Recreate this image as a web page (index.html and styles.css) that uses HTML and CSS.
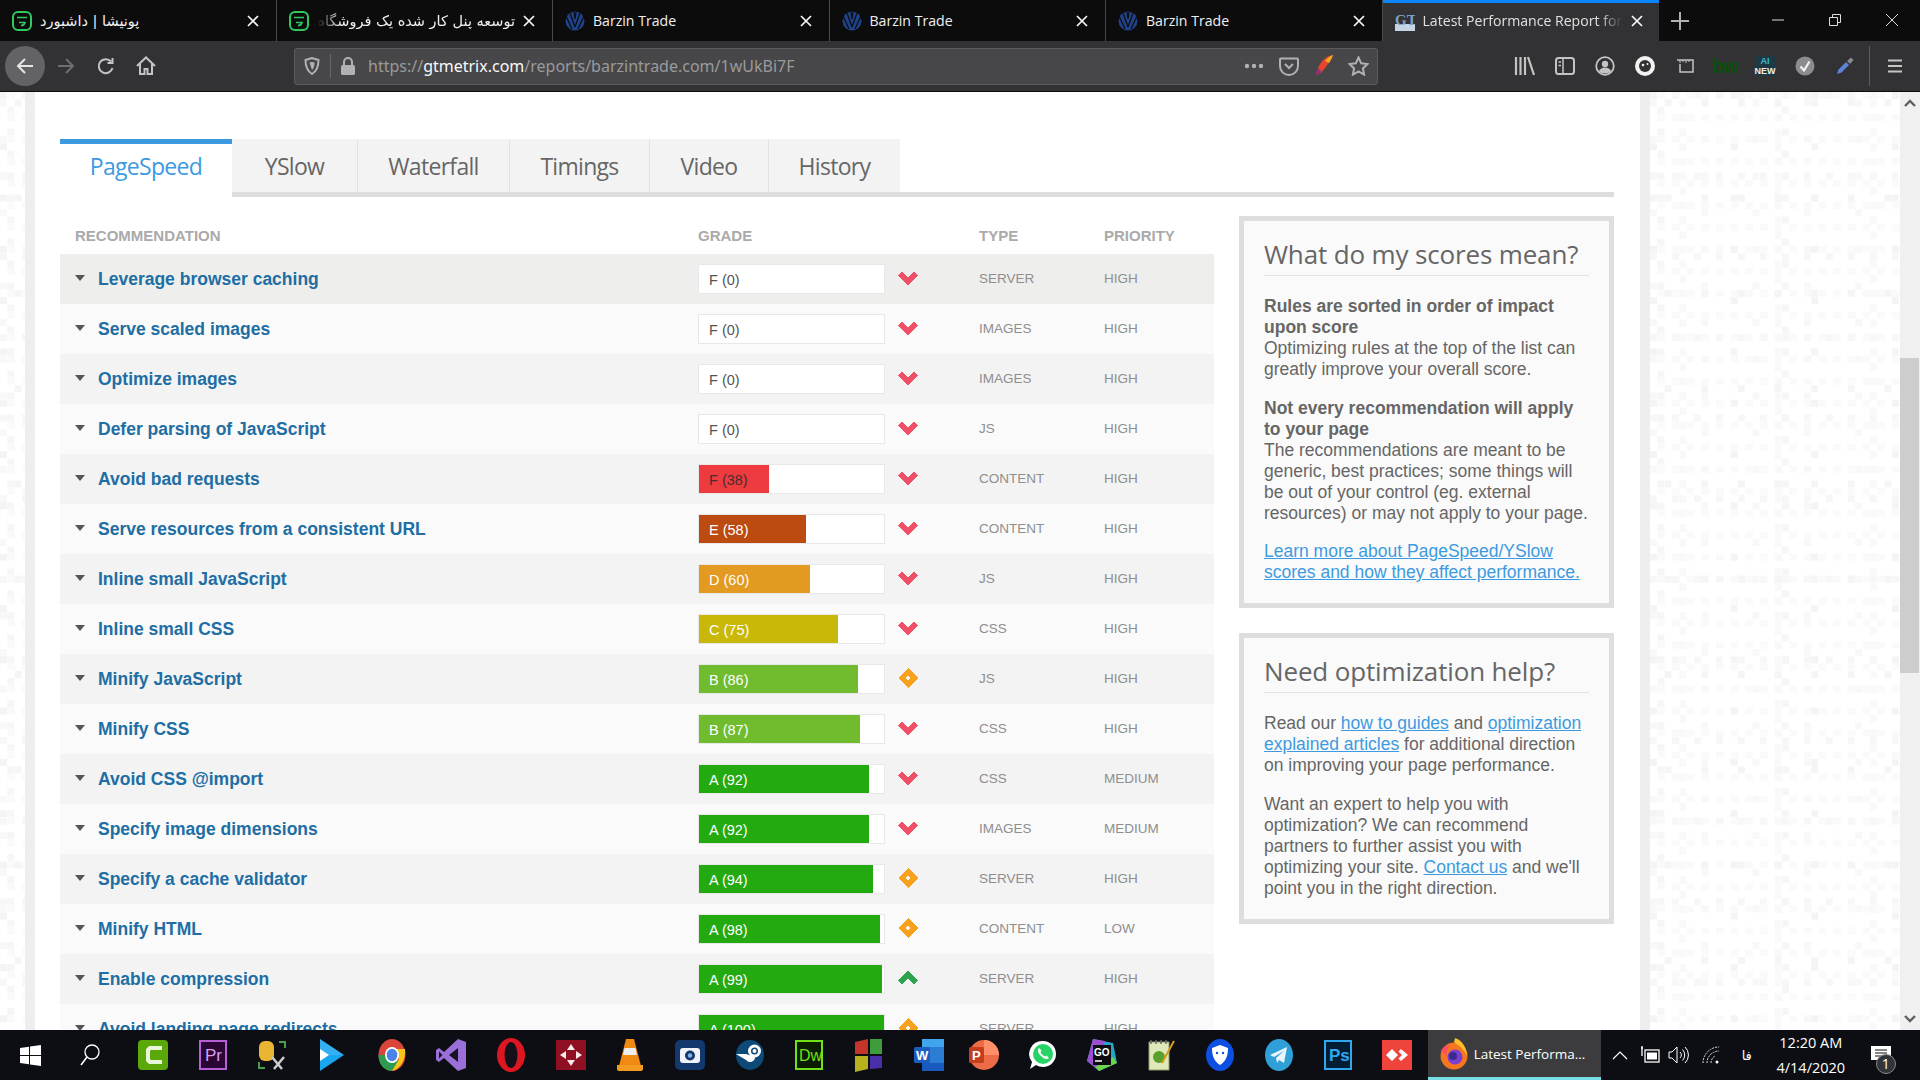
FILE: index.html
```html
<!DOCTYPE html>
<html>

<head>
	<meta charset="utf-8">
	<title>Latest Performance Report for: barzintrade.com</title>
	<link rel="stylesheet" href="styles.css">
</head>

<body>
	<svg class="defs" width="0" height="0">
		<symbol id="ponisha" viewBox="0 0 20 20">
			<rect x="1" y="1" width="18" height="18" rx="5" fill="none" stroke="#2ecc5f" stroke-width="2" />
			<path d="M5 6.5h10M7 11.5h6c-.5 2-2 3-4 3" fill="none" stroke="#2ecc5f" stroke-width="1.6" />
		</symbol>
		<symbol id="barzin" viewBox="0 0 20 20">
			<circle cx="10" cy="10" r="9.5" fill="#1f4288" />
			<path d="M1 5l6 13M5 2l5 14M10 16l5-14M13 18l6-13M9 1l1 7 1-7" fill="none" stroke="#0c0c0d" stroke-width="1.2" />
		</symbol>
		<symbol id="close" viewBox="0 0 12 12">
			<path d="M1 1l10 10M11 1L1 11" fill="none" stroke="#f9f9fa" stroke-width="1.7" />
		</symbol>
		<symbol id="down" viewBox="0 0 20 14">
			<path d="M0 4.5L4 .5l6 5.5 6-5.5 4 4L10 14z" fill="#ef5068" />
		</symbol>
		<symbol id="up" viewBox="0 0 20 14">
			<path d="M0 9.5L4 13.5l6-5.5 6 5.5 4-4L10 0z" fill="#2fa24e" />
		</symbol>
		<symbol id="same" viewBox="0 0 20 20">
			<path d="M10 0l10 10-10 10L0 10zM10 7.5L7.5 10l2.5 2.5 2.5-2.5z" fill="#f7a11e" fill-rule="evenodd" />
		</symbol>
	</svg>

	<div class="tabstrip">
		<div class="tab">
			<svg class="favicon"><use href="#ponisha" /></svg>
			<span class="tab-title fa-title">پونیشا | داشبورد</span>
			<svg class="tab-close"><use href="#close" /></svg>
		</div>
		<div class="tab">
			<svg class="favicon"><use href="#ponisha" /></svg>
			<span class="tab-title fa-title rtl">توسعه پنل کار شده یک فروشگاه</span>
			<svg class="tab-close"><use href="#close" /></svg>
		</div>
		<div class="tab">
			<svg class="favicon"><use href="#barzin" /></svg>
			<span class="tab-title">Barzin Trade</span>
			<svg class="tab-close"><use href="#close" /></svg>
		</div>
		<div class="tab">
			<svg class="favicon"><use href="#barzin" /></svg>
			<span class="tab-title">Barzin Trade</span>
			<svg class="tab-close"><use href="#close" /></svg>
		</div>
		<div class="tab">
			<svg class="favicon"><use href="#barzin" /></svg>
			<span class="tab-title">Barzin Trade</span>
			<svg class="tab-close"><use href="#close" /></svg>
		</div>
		<div class="tab tab-active">
			<svg class="favicon" viewBox="0 0 20 20">
				<rect y="13" width="20" height="7" fill="#c4d6e6" />
				<text x="0" y="14" class="gt-mark">GT</text>
			</svg>
			<span class="tab-title tab-fade">Latest Performance Report for:</span>
			<svg class="tab-close"><use href="#close" /></svg>
		</div>
		<div class="new-tab">
			<svg width="18" height="18" viewBox="0 0 18 18"><path d="M9 0v18M0 9h18" stroke="#b1b1b3" stroke-width="2" /></svg>
		</div>
		<div class="window-controls">
			<svg width="14" height="14" viewBox="0 0 14 14"><path d="M1 7h12" stroke="#ddd" /></svg>
			<svg width="14" height="14" viewBox="0 0 14 14"><path d="M1.5 4.5h8v8h-8zM4.5 4V1.5h8v8H10" fill="none" stroke="#ddd" /></svg>
			<svg width="14" height="14" viewBox="0 0 14 14"><path d="M1 1l12 12M13 1L1 13" stroke="#ddd" /></svg>
		</div>
	</div>

	<div class="toolbar">
		<div class="back-btn">
			<svg width="18" height="18" viewBox="0 0 18 18"><path d="M17 9H2M9 2L2 9l7 7" fill="none" stroke="#e6e6e6" stroke-width="2" /></svg>
		</div>
		<div class="tool-cell">
			<svg width="18" height="18" viewBox="0 0 18 18"><path d="M1 9h15M9 2l7 7-7 7" fill="none" stroke="#6f6f71" stroke-width="2" /></svg>
		</div>
		<div class="tool-cell">
			<svg width="18" height="18" viewBox="0 0 18 18"><path d="M15.5 11A7 7 0 1 1 14 4.5M15.5 1v5h-5" fill="none" stroke="#c4c4c5" stroke-width="2" /></svg>
		</div>
		<div class="tool-cell">
			<svg width="20" height="20" viewBox="0 0 20 20"><path d="M1 10l9-8.5 9 8.5M4 8v10h4.5v-5h3v5H16V8" fill="none" stroke="#c4c4c5" stroke-width="2" /></svg>
		</div>

		<div class="urlbar">
			<div class="url-cell url-shield">
				<svg width="16" height="18" viewBox="0 0 16 18"><path d="M1.5 3L8 1l6.5 2c0 7-1.5 11-6.500 14C3 14 1.500 10 1.500 3z" fill="none" stroke="#b1b1b3" stroke-width="2" /><path d="M5.5 5.5L8 5l2.5.5C10.5 9 10 11 8 13z" fill="#b1b1b3" /></svg>
			</div>
			<div class="url-sep"></div>
			<div class="url-cell url-lock">
				<svg width="16" height="18" viewBox="0 0 16 18"><path d="M4 8V5a4 4 0 0 1 8 0v3" fill="none" stroke="#b1b1b3" stroke-width="2" /><rect x="1" y="8" width="14" height="10" rx="1.5" fill="#b1b1b3" /></svg>
			</div>
			<div class="url-text">https://<b>gtmetrix.com</b>/reports/barzintrade.com/1wUkBi7F</div>
			<div class="url-cell">
				<svg width="20" height="6" viewBox="0 0 20 6"><circle cx="3" cy="3" r="2.2" fill="#b1b1b3" /><circle cx="10" cy="3" r="2.2" fill="#b1b1b3" /><circle cx="17" cy="3" r="2.2" fill="#b1b1b3" /></svg>
			</div>
			<div class="url-cell">
				<svg width="20" height="19" viewBox="0 0 20 19"><path d="M1 2.5a1 1 0 0 1 1-1h16a1 1 0 0 1 1 1V9a9 9 0 0 1-18 0z" fill="none" stroke="#b1b1b3" stroke-width="2" /><path d="M6 7l4 4 4-4" fill="none" stroke="#b1b1b3" stroke-width="2" /></svg>
			</div>
			<div class="url-cell">
				<svg width="20" height="22" viewBox="0 0 20 22"><path d="M19 0C12 1 7 6 4 13l-2 6 1 1c2-1 5-3 8-7 3-4 7-9 8-13z" fill="#e8452c" /><path d="M19 0c-3 1-6 3-8 6l4 2c2-3 3-5 4-8z" fill="#f5a623" /><path d="M4 13l-2 6 1 1c2-1 3-2 4-4z" fill="#8e2a8a" /></svg>
			</div>
			<div class="url-cell">
				<svg width="21" height="20" viewBox="0 0 21 20"><path d="M10.5 1.5l2.7 5.8 6.3.8-4.600 4.300 1.200 6.200-5.600-3.100-5.600 3.100 1.200-6.200L1.500 8.100l6.300-.8z" fill="none" stroke="#b1b1b3" stroke-width="2" /></svg>
			</div>
		</div>

		<div class="tool-icons">
			<div class="tool-cell">
				<svg width="22" height="20" viewBox="0 0 22 20"><path d="M2 1v18M6.5 1v18M11 1v18M14 1l6 18" fill="none" stroke="#c4c4c5" stroke-width="2.2" /></svg>
			</div>
			<div class="tool-cell">
				<svg width="20" height="18" viewBox="0 0 20 18"><rect x="1" y="1" width="18" height="16" rx="2.5" fill="none" stroke="#c4c4c5" stroke-width="2" /><path d="M8 1v16M3.5 5h2.5M3.5 8.5h2.5" stroke="#c4c4c5" stroke-width="1.5" /></svg>
			</div>
			<div class="tool-cell">
				<svg width="20" height="20" viewBox="0 0 20 20"><circle cx="10" cy="10" r="8.8" fill="none" stroke="#c4c4c5" stroke-width="1.8" /><circle cx="10" cy="8" r="3.2" fill="#c4c4c5" /><path d="M4 15.5c1-3 3-4 6-4s5 1 6 4c-3 2.5-9 2.5-12 0z" fill="#c4c4c5" /></svg>
			</div>
			<div class="tool-cell">
				<svg width="22" height="22" viewBox="0 0 22 22"><circle cx="11" cy="11" r="10" fill="#f2f2f2" /><circle cx="11" cy="11" r="6" fill="#323234" /><circle cx="9" cy="10" r="1.3" fill="#f2f2f2" /><circle cx="13.5" cy="9" r="1" fill="#f2f2f2" /></svg>
			</div>
			<div class="tool-cell">
				<svg width="18" height="14" viewBox="0 0 18 14"><path d="M1 1h16v12H4V5" fill="none" stroke="#c4c4c5" stroke-width="1.5" /><path d="M4 1v3M7 1v2M10 1v3M13 1v2" stroke="#c4c4c5" /></svg>
			</div>
			<div class="tool-cell"><span class="ext-bw">bw</span></div>
			<div class="tool-cell">
				<div class="ext-new"><i>AI</i>NEW</div>
			</div>
			<div class="tool-cell">
				<svg width="20" height="20" viewBox="0 0 20 20"><circle cx="10" cy="10" r="9.5" fill="#8c8c8e" /><path d="M5.5 10.5l3.5 4 5.5-9" fill="none" stroke="#f2f2f2" stroke-width="2.2" /></svg>
			</div>
			<div class="tool-cell">
				<svg width="18" height="18" viewBox="0 0 18 18"><path d="M1 17l1.5-4.5L10 5l3 3-7.5 7.5z" fill="#5d82d8" /><path d="M11 4l4-3.5 2.5 2.5L14 7z" fill="#8a8a8c" /></svg>
			</div>
		</div>
		<div class="tool-sep"></div>
		<div class="tool-cell menu-cell">
			<svg width="16" height="16" viewBox="0 0 16 16"><path d="M1 2.5h14M1 8h14M1 13.5h14" stroke="#c4c4c5" stroke-width="2.2" /></svg>
		</div>
	</div>

	<div class="viewport">
		<div class="gutter gutter-left"></div>

		<div class="report">
			<ul class="report-tabs">
				<li class="report-tab report-tab-active">PageSpeed</li>
				<li class="report-tab tab-yslow">YSlow</li>
				<li class="report-tab tab-waterfall">Waterfall</li>
				<li class="report-tab tab-timings">Timings</li>
				<li class="report-tab tab-video">Video</li>
				<li class="report-tab tab-history">History</li>
			</ul>

			<div class="report-body">
				<div class="rec-table">
					<div class="rec-head">
						<span class="col-name">RECOMMENDATION</span>
						<span class="col-grade">GRADE</span>
						<span class="col-type">TYPE</span>
						<span class="col-priority">PRIORITY</span>
					</div>

					<div class="rec-row rec-row-hover">
						<span class="col-name"><i class="caret"></i>Leverage browser caching</span>
						<div class="grade"><span class="grade-fill"></span><span class="grade-label">F (0)</span></div>
						<svg class="trend"><use href="#down" /></svg>
						<span class="col-type">SERVER</span><span class="col-priority">HIGH</span>
					</div>
					<div class="rec-row">
						<span class="col-name"><i class="caret"></i>Serve scaled images</span>
						<div class="grade"><span class="grade-fill"></span><span class="grade-label">F (0)</span></div>
						<svg class="trend"><use href="#down" /></svg>
						<span class="col-type">IMAGES</span><span class="col-priority">HIGH</span>
					</div>
					<div class="rec-row">
						<span class="col-name"><i class="caret"></i>Optimize images</span>
						<div class="grade"><span class="grade-fill"></span><span class="grade-label">F (0)</span></div>
						<svg class="trend"><use href="#down" /></svg>
						<span class="col-type">IMAGES</span><span class="col-priority">HIGH</span>
					</div>
					<div class="rec-row">
						<span class="col-name"><i class="caret"></i>Defer parsing of JavaScript</span>
						<div class="grade"><span class="grade-fill"></span><span class="grade-label">F (0)</span></div>
						<svg class="trend"><use href="#down" /></svg>
						<span class="col-type">JS</span><span class="col-priority">HIGH</span>
					</div>
					<div class="rec-row">
						<span class="col-name"><i class="caret"></i>Avoid bad requests</span>
						<div class="grade grade-f"><span class="grade-fill" style="width: 38%"></span><span class="grade-label">F (38)</span></div>
						<svg class="trend"><use href="#down" /></svg>
						<span class="col-type">CONTENT</span><span class="col-priority">HIGH</span>
					</div>
					<div class="rec-row">
						<span class="col-name"><i class="caret"></i>Serve resources from a consistent URL</span>
						<div class="grade grade-e"><span class="grade-fill" style="width: 58%"></span><span class="grade-label">E (58)</span></div>
						<svg class="trend"><use href="#down" /></svg>
						<span class="col-type">CONTENT</span><span class="col-priority">HIGH</span>
					</div>
					<div class="rec-row">
						<span class="col-name"><i class="caret"></i>Inline small JavaScript</span>
						<div class="grade grade-d"><span class="grade-fill" style="width: 60%"></span><span class="grade-label">D (60)</span></div>
						<svg class="trend"><use href="#down" /></svg>
						<span class="col-type">JS</span><span class="col-priority">HIGH</span>
					</div>
					<div class="rec-row">
						<span class="col-name"><i class="caret"></i>Inline small CSS</span>
						<div class="grade grade-c"><span class="grade-fill" style="width: 75%"></span><span class="grade-label">C (75)</span></div>
						<svg class="trend"><use href="#down" /></svg>
						<span class="col-type">CSS</span><span class="col-priority">HIGH</span>
					</div>
					<div class="rec-row">
						<span class="col-name"><i class="caret"></i>Minify JavaScript</span>
						<div class="grade grade-b"><span class="grade-fill" style="width: 86%"></span><span class="grade-label">B (86)</span></div>
						<svg class="trend trend-same"><use href="#same" /></svg>
						<span class="col-type">JS</span><span class="col-priority">HIGH</span>
					</div>
					<div class="rec-row">
						<span class="col-name"><i class="caret"></i>Minify CSS</span>
						<div class="grade grade-b"><span class="grade-fill" style="width: 87%"></span><span class="grade-label">B (87)</span></div>
						<svg class="trend"><use href="#down" /></svg>
						<span class="col-type">CSS</span><span class="col-priority">HIGH</span>
					</div>
					<div class="rec-row">
						<span class="col-name"><i class="caret"></i>Avoid CSS @import</span>
						<div class="grade grade-a"><span class="grade-fill" style="width: 92%"></span><span class="grade-label">A (92)</span></div>
						<svg class="trend"><use href="#down" /></svg>
						<span class="col-type">CSS</span><span class="col-priority">MEDIUM</span>
					</div>
					<div class="rec-row">
						<span class="col-name"><i class="caret"></i>Specify image dimensions</span>
						<div class="grade grade-a"><span class="grade-fill" style="width: 92%"></span><span class="grade-label">A (92)</span></div>
						<svg class="trend"><use href="#down" /></svg>
						<span class="col-type">IMAGES</span><span class="col-priority">MEDIUM</span>
					</div>
					<div class="rec-row">
						<span class="col-name"><i class="caret"></i>Specify a cache validator</span>
						<div class="grade grade-a"><span class="grade-fill" style="width: 94%"></span><span class="grade-label">A (94)</span></div>
						<svg class="trend trend-same"><use href="#same" /></svg>
						<span class="col-type">SERVER</span><span class="col-priority">HIGH</span>
					</div>
					<div class="rec-row">
						<span class="col-name"><i class="caret"></i>Minify HTML</span>
						<div class="grade grade-a"><span class="grade-fill" style="width: 98%"></span><span class="grade-label">A (98)</span></div>
						<svg class="trend trend-same"><use href="#same" /></svg>
						<span class="col-type">CONTENT</span><span class="col-priority">LOW</span>
					</div>
					<div class="rec-row">
						<span class="col-name"><i class="caret"></i>Enable compression</span>
						<div class="grade grade-a"><span class="grade-fill" style="width: 99%"></span><span class="grade-label">A (99)</span></div>
						<svg class="trend"><use href="#up" /></svg>
						<span class="col-type">SERVER</span><span class="col-priority">HIGH</span>
					</div>
					<div class="rec-row">
						<span class="col-name"><i class="caret"></i>Avoid landing page redirects</span>
						<div class="grade grade-a"><span class="grade-fill" style="width: 100%"></span><span class="grade-label">A (100)</span></div>
						<svg class="trend trend-same"><use href="#same" /></svg>
						<span class="col-type">SERVER</span><span class="col-priority">HIGH</span>
					</div>
				</div>

				<div class="side">
					<div class="side-box">
						<h3>What do my scores mean?</h3>
						<p><b>Rules are sorted in order of impact upon score</b><br>Optimizing rules at the top of the list can greatly improve your overall score.</p>
						<p><b>Not every recommendation will apply to your page</b><br>The recommendations are meant to be generic, best practices; some things will be out of your control (eg. external resources) or may not apply to your page.</p>
						<p><a href="#">Learn more about PageSpeed/YSlow scores and how they affect performance.</a></p>
					</div>
					<div class="side-box">
						<h3>Need optimization help?</h3>
						<p>Read our <a href="#">how to guides</a> and <a href="#">optimization explained articles</a> for additional direction on improving your page performance.</p>
						<p>Want an expert to help you with optimization? We can recommend partners to further assist you with optimizing your site. <a href="#">Contact us</a> and we'll point you in the right direction.</p>
					</div>
				</div>
			</div>
		</div>

		<div class="gutter gutter-right"></div>

		<div class="scrollbar">
			<svg width="14" height="10" viewBox="0 0 14 10"><path d="M2 8l5-5 5 5" fill="none" stroke="#606060" stroke-width="2.4" /></svg>
			<div class="scroll-track"><div class="scroll-thumb"></div></div>
			<svg width="14" height="10" viewBox="0 0 14 10"><path d="M2 2l5 5 5-5" fill="none" stroke="#606060" stroke-width="2.4" /></svg>
		</div>
	</div>

	<div class="taskbar">
		<div class="task-cell task-start">
			<svg width="21" height="21" viewBox="0 0 21 21"><path d="M0 3l9-1.300V10H0zM10 1.500L21 0v10H10zM0 11h9v8.300L0 18zM10 11h11v10l-11-1.500z" fill="#fff" /></svg>
		</div>
		<div class="task-cell task-search">
			<svg width="22" height="24" viewBox="0 0 22 24"><circle cx="13" cy="9" r="7" fill="none" stroke="#fff" stroke-width="1.3" /><path d="M8 14l-6 8" stroke="#fff" stroke-width="1.6" /></svg>
		</div>
		<div class="task-cell">
			<svg width="30" height="30" viewBox="0 0 30 30"><rect width="30" height="30" rx="4" fill="#5aa80a" /><path d="M24 6H11L8 9v12l3 3h13v-4H13l-1-1v-8l1-1h11z" fill="#e9f5d8" /></svg>
		</div>
		<div class="task-cell">
			<svg width="28" height="30" viewBox="0 0 28 30"><rect x="1" y="1" width="26" height="28" fill="#2a0634" stroke="#b65fd6" stroke-width="2" /><text x="6" y="21" class="tile-text tile-pr">Pr</text></svg>
		</div>
		<div class="task-cell">
			<svg width="30" height="30" viewBox="0 0 30 30"><rect x="2" y="1" width="15" height="20" rx="6" fill="#eab532" /><path d="M22 2h6v6M2 22v6h6" fill="none" stroke="#4c9c4e" stroke-width="2" /><path d="M15 17l10 12M27 17L17 29" stroke="#ccc" stroke-width="2.5" /></svg>
		</div>
		<div class="task-cell">
			<svg width="26" height="32" viewBox="0 0 26 32"><path d="M1 0l24 16L1 32z" fill="#19a6f1" /><path d="M1 0l24 16H1z" fill="#fff" opacity=".12" /><path d="M1 10l9 6-9 6z" fill="#fff" /></svg>
		</div>
		<div class="task-cell">
			<svg width="28" height="32" viewBox="0 0 28 32"><ellipse cx="14" cy="16" rx="13.5" ry="16" fill="#d9453a" /><path d="M14 16L.5 16C.5 25 6 32 14 32l6-9z" fill="#2e9c50" /><path d="M14 10h13c1 8-3 20-13 22l7-12z" fill="#f5c518" /><ellipse cx="14" cy="16" rx="7" ry="8" fill="#fff" /><ellipse cx="14" cy="16" rx="5.3" ry="6.2" fill="#4a84e8" /></svg>
		</div>
		<div class="task-cell">
			<svg width="30" height="32" viewBox="0 0 30 32"><path d="M22 0l8 3v26l-8 3L8 19l-5 4-3-2V11l3-2 5 4z" fill="#9a6fd8" /><path d="M22 9v14l-9-7zM3 12.5L6.5 16 3 19.5z" fill="#171321" /></svg>
		</div>
		<div class="task-cell">
			<svg width="28" height="34" viewBox="0 0 28 34"><ellipse cx="14" cy="17" rx="14" ry="17" fill="#dd1622" /><ellipse cx="14" cy="17" rx="6.5" ry="13" fill="#16101a" /></svg>
		</div>
		<div class="task-cell">
			<svg width="30" height="30" viewBox="0 0 30 30"><rect width="30" height="30" fill="#8e1022" /><path d="M15 4l4 6h-8zM15 26l-4-6h8zM4 15l6-4v8zM26 15l-6 4v-8z" fill="#f6e9e9" /></svg>
		</div>
		<div class="task-cell">
			<svg width="26" height="34" viewBox="0 0 26 34"><path d="M9 1h8l7 27H2z" fill="#f08a12" /><path d="M7.5 10h11l1.400 7H6z" fill="#eee" /><path d="M0 27h26v4a2 2 0 0 1-2 2H2a2 2 0 0 1-2-2z" fill="#f59a20" /></svg>
		</div>
		<div class="task-cell">
			<svg width="30" height="30" viewBox="0 0 30 30"><rect width="30" height="30" rx="5" fill="#12386e" /><rect x="5" y="8" width="20" height="15" rx="3" fill="#f0f4fa" /><circle cx="15" cy="15.5" r="5" fill="#12386e" /><circle cx="15" cy="15.5" r="2.2" fill="#7fb2e8" /></svg>
		</div>
		<div class="task-cell">
			<svg width="28" height="30" viewBox="0 0 28 30"><ellipse cx="14" cy="15" rx="14" ry="15" fill="#0e4a78" /><path d="M0 14l10 6a5 5 0 0 0 9-3l-9-3z" fill="#fff" /><circle cx="18.5" cy="11" r="6.5" fill="#fff" /><circle cx="18.5" cy="11" r="3.5" fill="#0e4a78" /><circle cx="18.5" cy="11" r="2" fill="#fff" /></svg>
		</div>
		<div class="task-cell">
			<svg width="28" height="30" viewBox="0 0 28 30"><rect x="1" y="1" width="26" height="28" fill="#0c1c00" stroke="#6fe01a" stroke-width="2" /><text x="4" y="21" class="tile-text tile-dw">Dw</text></svg>
		</div>
		<div class="task-cell">
			<svg width="28" height="34" viewBox="0 0 28 34"><path d="M0 4l13-3v15H0z" fill="#c4342a" /><path d="M15 1l12 0v15H15z" fill="#3f9c3a" /><path d="M0 18h13v13L0 34z" fill="#b7b11e" /><path d="M15 18h12v12l-12 1z" fill="#4b2fa8" /></svg>
		</div>
		<div class="task-cell">
			<svg width="30" height="32" viewBox="0 0 30 32"><rect x="8" y="0" width="22" height="32" rx="2" fill="#2b7cd3" /><rect x="8" y="0" width="22" height="8" fill="#41a5ee" /><rect x="8" y="24" width="22" height="8" fill="#185abd" /><rect x="0" y="8" width="16" height="16" rx="1.5" fill="#1a5fc0" /><text x="2" y="21" class="tile-text tile-word">W</text></svg>
		</div>
		<div class="task-cell">
			<svg width="30" height="30" viewBox="0 0 30 30"><circle cx="15" cy="15" r="15" fill="#ed6c47" /><path d="M15 0a15 15 0 0 1 15 15H15z" fill="#ff8f6b" /><rect y="7" width="15" height="16" rx="1.5" fill="#c43e1c" /><text x="3" y="20" class="tile-text tile-word">P</text></svg>
		</div>
		<div class="task-cell">
			<svg width="28" height="30" viewBox="0 0 28 30"><path d="M14 1a13 13 0 0 1 0 26c-2.5 0-5-.7-7-2l-6 4 2-7A13 13 0 0 1 14 1z" fill="#fff" /><circle cx="14" cy="14" r="10" fill="#25d366" /><path d="M10 8c-2 2-1 5 2 8s6 4 8 2l-2.5-2.5-1.5 1c-2-.7-3.5-2.2-4.5-4.5l1-1.5z" fill="#fff" /></svg>
		</div>
		<div class="task-cell">
			<svg width="30" height="32" viewBox="0 0 30 32"><path d="M6 0l20 4 4 20-18 8L0 22z" fill="#22a6c7" /><path d="M6 0l12 2-8 28-10-8z" fill="#9b4fd0" /><path d="M26 18l4 6-18 8-4-4z" fill="#6fd44a" /><rect x="6" y="6" width="18" height="20" fill="#0c0c10" /><text x="7" y="17" class="tile-text tile-go">GO</text><path d="M8 22h7" stroke="#fff" stroke-width="1.5" /></svg>
		</div>
		<div class="task-cell">
			<svg width="28" height="32" viewBox="0 0 28 32"><path d="M2 3h20v28H2z" fill="#dfe8b8" stroke="#8a9c6a" /><path d="M4 1v4M9 1v4M14 1v4M19 1v4" stroke="#6b6b6b" stroke-width="1.5" /><circle cx="12" cy="18" r="6" fill="#5aa02c" /><path d="M27 2L15 24" stroke="#d49a1c" stroke-width="2" /></svg>
		</div>
		<div class="task-cell">
			<svg width="28" height="32" viewBox="0 0 28 32"><ellipse cx="14" cy="16" rx="14" ry="16" fill="#0d4fe0" /><path d="M14 6l8 3c0 8-2 13-8 17-6-4-8-9-8-17z" fill="#fff" /><circle cx="11" cy="14" r="1.2" fill="#0d4fe0" /><circle cx="17" cy="14" r="1.2" fill="#0d4fe0" /></svg>
		</div>
		<div class="task-cell">
			<svg width="28" height="32" viewBox="0 0 28 32"><ellipse cx="14" cy="16" rx="14" ry="16" fill="#2f9fd8" /><path d="M5 16l17-8-3 16-5-3-2 3-1-5 8-7-10 6z" fill="#e9f5fb" /></svg>
		</div>
		<div class="task-cell">
			<svg width="28" height="30" viewBox="0 0 28 30"><rect x="1" y="1" width="26" height="28" fill="#001d33" stroke="#2fa8f0" stroke-width="2" /><text x="5" y="21" class="tile-text tile-ps">Ps</text></svg>
		</div>
		<div class="task-cell">
			<svg width="30" height="30" viewBox="0 0 30 30"><rect width="30" height="30" fill="#ef443b" /><path d="M10 9l6 6-6 6-6-6zM19 9l7 6-7 6-2.5-2.5L20 15l-3.5-3.5z" fill="#fff" /></svg>
		</div>
		<div class="task-active">
			<svg width="28" height="32" viewBox="0 0 28 32"><circle cx="14" cy="18" r="13.5" fill="#f5761f" /><path d="M14 4c3 3 9 5 13 14C27 10 22 2 15 0z" fill="#ffbd2e" /><path d="M1 13c2-4 6-6 9-6-3 3-4 7-3 11z" fill="#ff4f5e" /><circle cx="15" cy="19" r="7.5" fill="#7a3fd0" /><circle cx="13" cy="18" r="4" fill="#3a2a8c" /></svg>
			<span>Latest Performa...</span>
		</div>
		<div class="tray">
			<svg width="16" height="10" viewBox="0 0 16 10"><path d="M1 9l7-7 7 7" fill="none" stroke="#fff" stroke-width="1.2" /></svg>
			<svg width="20" height="20" viewBox="0 0 20 20"><rect x="5" y="5" width="14" height="12" fill="none" stroke="#fff" stroke-width="1.3" /><rect x="7" y="7.5" width="10" height="7" fill="#fff" /><path d="M2 1v5M1 3h2M2 6v5" stroke="#fff" stroke-width="1.3" /></svg>
			<svg class="tray-vol" width="22" height="22" viewBox="0 0 22 22"><path d="M2 8h3l5-5v16l-5-5H2z" fill="none" stroke="#fff" /><path d="M13 8a4 4 0 0 1 0 6M15.5 5.5a8 8 0 0 1 0 11M18 3a11 11 0 0 1 0 16" fill="none" stroke="#fff" /></svg>
			<svg width="20" height="20" viewBox="0 0 20 20"><path d="M2 18A16 16 0 0 1 18 2M6 18A12 12 0 0 1 18 6M10 18a8 8 0 0 1 4-7" fill="none" stroke="#ddd" stroke-dasharray="2 1" /><circle cx="16" cy="17" r="1.5" fill="#fff" /></svg>
			<span class="tray-lang">فا</span>
			<div class="clock"><span>12:20 AM</span><span>4/14/2020</span></div>
			<div class="notify">
				<svg width="20" height="18" viewBox="0 0 20 18"><path d="M0 0h20v14h-7l-4 4v-4H0z" fill="#fff" /><path d="M4 4h12M4 7h12M4 10h12" stroke="#0c0e13" /></svg>
				<span class="notify-badge">1</span>
			</div>
		</div>
	</div>
</body>

</html>
```

FILE: styles.css
```css
* {
	box-sizing: border-box;
}

html,
body {
	margin: 0;
	height: 100%;
	overflow: hidden;
}

body {
	display: flex;
	flex-direction: column;
	font-family: "Liberation Sans", Arial, sans-serif;
	background: #fff;
}

.defs {
	display: none;
}

/* browser tabs */
.tabstrip {
	display: flex;
	height: 41px;
	background: #0c0c0d;
	flex: none;
}

.tab {
	display: flex;
	align-items: center;
	width: 276.5px;
	padding: 0 17px 0 12px;
	border-right: 1px solid #4a4a4b;
	color: #f0f0f0;
	font: 14.1px "Open Sans", sans-serif;
}

.tab-active {
	background: #323234;
	border-top: 3px solid #0a84ff;
	border-right: 0;
	padding-bottom: 3px;
	padding-right: 16px;
	color: #e0e0e1;
}

.favicon {
	width: 20px;
	height: 20px;
	flex: none;
}

.gt-mark {
	font: bold 15px "Liberation Serif", serif;
	fill: #7ea3c4;
}

.tab-title {
	flex: 1;
	min-width: 0;
	margin: 0 8px;
	white-space: nowrap;
	overflow: hidden;
}

.tab-fade {
	-webkit-mask-image: linear-gradient(90deg, #000 88%, transparent);
	mask-image: linear-gradient(90deg, #000 88%, transparent);
}

.fa-title {
	font: 14.5px "DejaVu Sans", sans-serif;
}

.rtl {
	direction: rtl;
	-webkit-mask-image: linear-gradient(90deg, transparent, #000 12%);
	mask-image: linear-gradient(90deg, transparent, #000 12%);
}

.tab-close {
	width: 12px;
	height: 12px;
	flex: none;
}

.new-tab {
	width: 42px;
	display: flex;
	align-items: center;
	justify-content: center;
}

.window-controls {
	display: flex;
	align-items: center;
	gap: 43px;
	margin-left: auto;
	padding-right: 21px;
	padding-bottom: 2px;
}

/* address bar row */
.toolbar {
	display: flex;
	align-items: center;
	height: 51px;
	flex: none;
	padding-left: 5px;
	background: #323234;
	border-bottom: 1px solid #0c0c0d;
}

.back-btn {
	width: 40px;
	height: 40px;
	margin-right: 1px;
	border-radius: 50%;
	background: #636365;
	display: flex;
	align-items: center;
	justify-content: center;
}

.tool-cell {
	width: 40px;
	display: flex;
	align-items: center;
	justify-content: center;
	flex: none;
}

.urlbar {
	display: flex;
	align-items: center;
	width: 1084px;
	height: 37px;
	margin-left: 128px;
	padding: 0 1px 0 5px;
	background: #474749;
	border: 1px solid #5c5c5e;
	border-radius: 3px;
}

.url-cell {
	width: 35px;
	display: flex;
	align-items: center;
	justify-content: center;
	flex: none;
}

.url-shield {
	width: 24px;
	margin-right: 6px;
}

.url-sep {
	width: 1px;
	height: 24px;
	background: #67676a;
}

.url-lock {
	width: 20px;
	margin-left: 7px;
	margin-right: 10px;
}

.url-text {
	flex: 1;
	font: 16px "Noto Sans", sans-serif;
	color: #9a9a9b;
	white-space: nowrap;
}

.url-text b {
	font-weight: 400;
	color: #f9f9fa;
}

.tool-icons {
	display: flex;
	align-items: center;
	margin-left: 127px;
}

.ext-bw {
	font: bold 20px "Liberation Sans", sans-serif;
	color: #0b4f0b;
	letter-spacing: -1px;
}

.ext-new {
	display: flex;
	flex-direction: column;
	align-items: center;
	width: 20px;
	height: 20px;
	font: bold 9px/10px "Liberation Sans", sans-serif;
	color: #eee;
	background: #1d3a44;
}

.ext-new i {
	font-style: normal;
	color: #3db7d8;
}

.tool-sep {
	width: 1px;
	height: 40px;
	margin-left: 4px;
	background: #5c5c5e;
}

.menu-cell {
	margin-left: 5px;
}

/* page area */
.viewport {
	display: flex;
	flex: 1;
	min-height: 0;
	overflow: hidden;
}

.gutter {
	background-color: #fff;
	background-image:
		conic-gradient(from 270deg at 7.33px 7.33px, #f4f4f4 25%, transparent 0),
		conic-gradient(from 270deg at 7.33px 7.33px, #f5f5f5 25%, transparent 0),
		conic-gradient(from 270deg at 7.33px 7.33px, #f6f6f6 25%, transparent 0),
		conic-gradient(from 270deg at 7.33px 7.33px, #f7f7f7 25%, transparent 0),
		conic-gradient(from 270deg at 7.33px 7.33px, #f8f8f8 25%, transparent 0),
		conic-gradient(from 270deg at 7.33px 7.33px, #f9f9f9 25%, transparent 0),
		conic-gradient(from 270deg at 7.33px 7.33px, #fafafa 25%, transparent 0);
	background-size: 80.63px 51.31px, 36.65px 95.29px, 124.61px 21.99px, 21.99px 80.63px, 51.31px 36.65px, 95.29px 14.66px, 14.66px 21.99px;
	background-position: 0 0, 14.66px 7.33px, 7.33px 14.66px, 21.99px 0, 0 7.33px, 29.32px 7.33px, 7.33px 0;
}

.gutter-left {
	width: 25px;
	flex: none;
}

.gutter-right {
	width: 250px;
	flex: none;
}

.report {
	width: 1625px;
	flex: none;
	padding: 47px 26px 0 25px;
	background: #fff;
	border-left: 10px solid #eee;
	border-right: 10px solid #eee;
}

.report-tabs {
	display: flex;
	list-style: none;
	margin: 0;
	padding: 0;
	height: 58px;
	border-bottom: 5px solid #ddd;
}

.report-tab {
	height: 53px;
	padding-top: 12px;
	text-align: center;
	background: #f3f3f3;
	border-left: 1px solid #e2e2e2;
	color: #666;
	font: 23px/30px "Open Sans", sans-serif;
	letter-spacing: -.7px;
}

.report-tab-active {
	width: 172px;
	height: 58px;
	padding-top: 7px;
	background: #fff;
	border-top: 5px solid #3d9ae0;
	border-left: 0;
	color: #3d9ae0;
}

.tab-yslow {
	width: 125px;
	border-left: 0;
}

.tab-waterfall {
	width: 152px;
}

.tab-timings {
	width: 140px;
}

.tab-video {
	width: 119px;
}

.tab-history {
	width: 132px;
}

.report-body {
	display: flex;
	align-items: flex-start;
	gap: 25px;
}

/* recommendations table */
.rec-table {
	width: 1154px;
	flex: none;
}

.rec-head,
.rec-row {
	display: grid;
	grid-template-columns: 638px 187px 94px 125px 1fr;
	align-items: center;
}

.rec-head {
	height: 57px;
	padding-top: 20px;
	font-size: 15px;
	font-weight: bold;
	color: #aaa;
}

.rec-head .col-name {
	padding-left: 15px;
}

.rec-head .col-grade {
	grid-column: 2 / 4;
}

.rec-row {
	height: 50px;
	background: #fafafa;
}

.rec-row:nth-child(even) {
	background: #f3f3f3;
}

.rec-row-hover:nth-child(even) {
	background: #eeeeec;
}

.rec-row .col-name {
	display: flex;
	align-items: center;
	font-size: 17.5px;
	font-weight: bold;
	color: #206ea4;
}

.caret {
	width: 0;
	height: 0;
	margin: -3px 13px 0 15px;
	border-left: 5px solid transparent;
	border-right: 5px solid transparent;
	border-top: 6px solid #555;
}

.col-type,
.col-priority {
	font-size: 13.5px;
	color: #8e8e8e;
}

.rec-row .col-type,
.rec-row .col-priority {
	margin-top: -2px;
}

.rec-head .col-type,
.rec-head .col-priority {
	font-size: 15px;
	color: #aaa;
}

.grade {
	display: grid;
	grid-template-rows: 28px;
	height: 30px;
	background: #fff;
	border: 1px solid #e8e8e8;
	overflow: hidden;
}

.grade-fill,
.grade-label {
	grid-area: 1 / 1;
}

.grade-label {
	padding-left: 10px;
	font-size: 14.5px;
	line-height: 30px;
	color: #fff;
	white-space: nowrap;
}

.grade:not([class*="grade-"]) .grade-label {
	color: #555;
}

.grade-f .grade-label {
	color: #4a2c2c;
}

.grade-f .grade-fill {
	background: #ee3b3f;
}

.grade-e .grade-fill {
	background: #bb4b10;
}

.grade-d .grade-fill {
	background: #e39a20;
}

.grade-c .grade-fill {
	background: #c9b808;
}

.grade-b .grade-fill {
	background: #71bb2f;
}

.grade-a .grade-fill {
	background: #23aa11;
}

.trend {
	width: 20px;
	height: 14px;
	margin: -3px 0 0 13px;
	shape-rendering: crispEdges;
}

.trend-same {
	width: 20px;
	height: 20px;
	margin-top: -3px;
}

/* sidebar boxes */
.side {
	flex: 1;
	display: flex;
	flex-direction: column;
	gap: 25px;
	padding-top: 19px;
}

.side-box {
	padding: 17px 20px 20px;
	background: #fafafa;
	border: 5px solid #dedede;
	font-size: 17.5px;
	line-height: 21px;
	color: #666;
}

.side-box h3 {
	margin: 0 0 20px;
	padding-bottom: 5px;
	border-bottom: 1px solid #e2e2e2;
	font: 26px/32px "Open Sans", sans-serif;
	letter-spacing: -.15px;
	color: #666;
}

.side-box p {
	margin: 0 0 17.5px;
}

.side-box p:last-child {
	margin-bottom: 0;
}

.side-box a {
	color: #3d9ae0;
}

/* scrollbar */
.scrollbar {
	flex: 1;
	display: flex;
	flex-direction: column;
	align-items: center;
	padding: 6px 0;
	background: #f0f0f0;
}

.scroll-track {
	flex: 1;
	align-self: stretch;
	padding-top: 250px;
}

.scroll-thumb {
	height: 315px;
	margin-right: 1px;
	background: #cdcdcd;
}

/* windows taskbar */
.taskbar {
	display: flex;
	align-items: center;
	height: 50px;
	flex: none;
	background: #0c0e13;
}

.task-cell {
	width: 59.7px;
	display: flex;
	align-items: center;
	justify-content: center;
	flex: none;
}

.task-cell:nth-child(n+17) {
	width: 59px;
}

.task-cell:nth-child(17) {
	margin-left: -4px;
}

.task-start {
	width: 60px;
}

.task-search {
	width: 63px;
	padding-right: 3px;
}

.tile-text {
	font-family: "Liberation Sans", sans-serif;
}

.tile-pr {
	font-size: 17px;
	fill: #d79df0;
}

.tile-dw {
	font-size: 16px;
	fill: #6fe01a;
}

.tile-ps {
	font-size: 17px;
	font-weight: bold;
	fill: #2fa8f0;
}

.tile-word {
	font-size: 13px;
	font-weight: bold;
	fill: #fff;
}

.tile-go {
	font-size: 10px;
	font-weight: bold;
	fill: #fff;
}

.task-active {
	display: flex;
	align-items: center;
	gap: 6px;
	width: 173px;
	height: 50px;
	margin-left: 1px;
	padding-left: 12px;
	background: #3c3c3e;
	border-bottom: 3px solid #76dfe6;
	color: #fff;
	font: 13.5px "Open Sans", sans-serif;
	white-space: nowrap;
	flex: none;
}

.tray {
	flex: 1;
	display: flex;
	align-items: center;
	padding-left: 11px;
	gap: 12px;
	color: #fff;
}

.tray-vol {
	margin-left: -5px;
}

.tray-lang {
	font: 13px "DejaVu Sans", sans-serif;
	margin-left: 9px;
}

.clock {
	display: flex;
	flex-direction: column;
	align-items: center;
	width: 86px;
	margin-left: 4px;
	font: 14.5px/25px "Open Sans", sans-serif;
}

.notify {
	display: grid;
	justify-items: center;
	width: 32px;
	margin-left: -1px;
	position: relative;
}

.notify-badge {
	position: absolute;
	right: 1px;
	bottom: -10px;
	width: 20px;
	height: 20px;
	border-radius: 50%;
	background: #33343a;
	border: 1px solid #888;
	font: 14px/18px "Open Sans", sans-serif;
	text-align: center;
}
```
